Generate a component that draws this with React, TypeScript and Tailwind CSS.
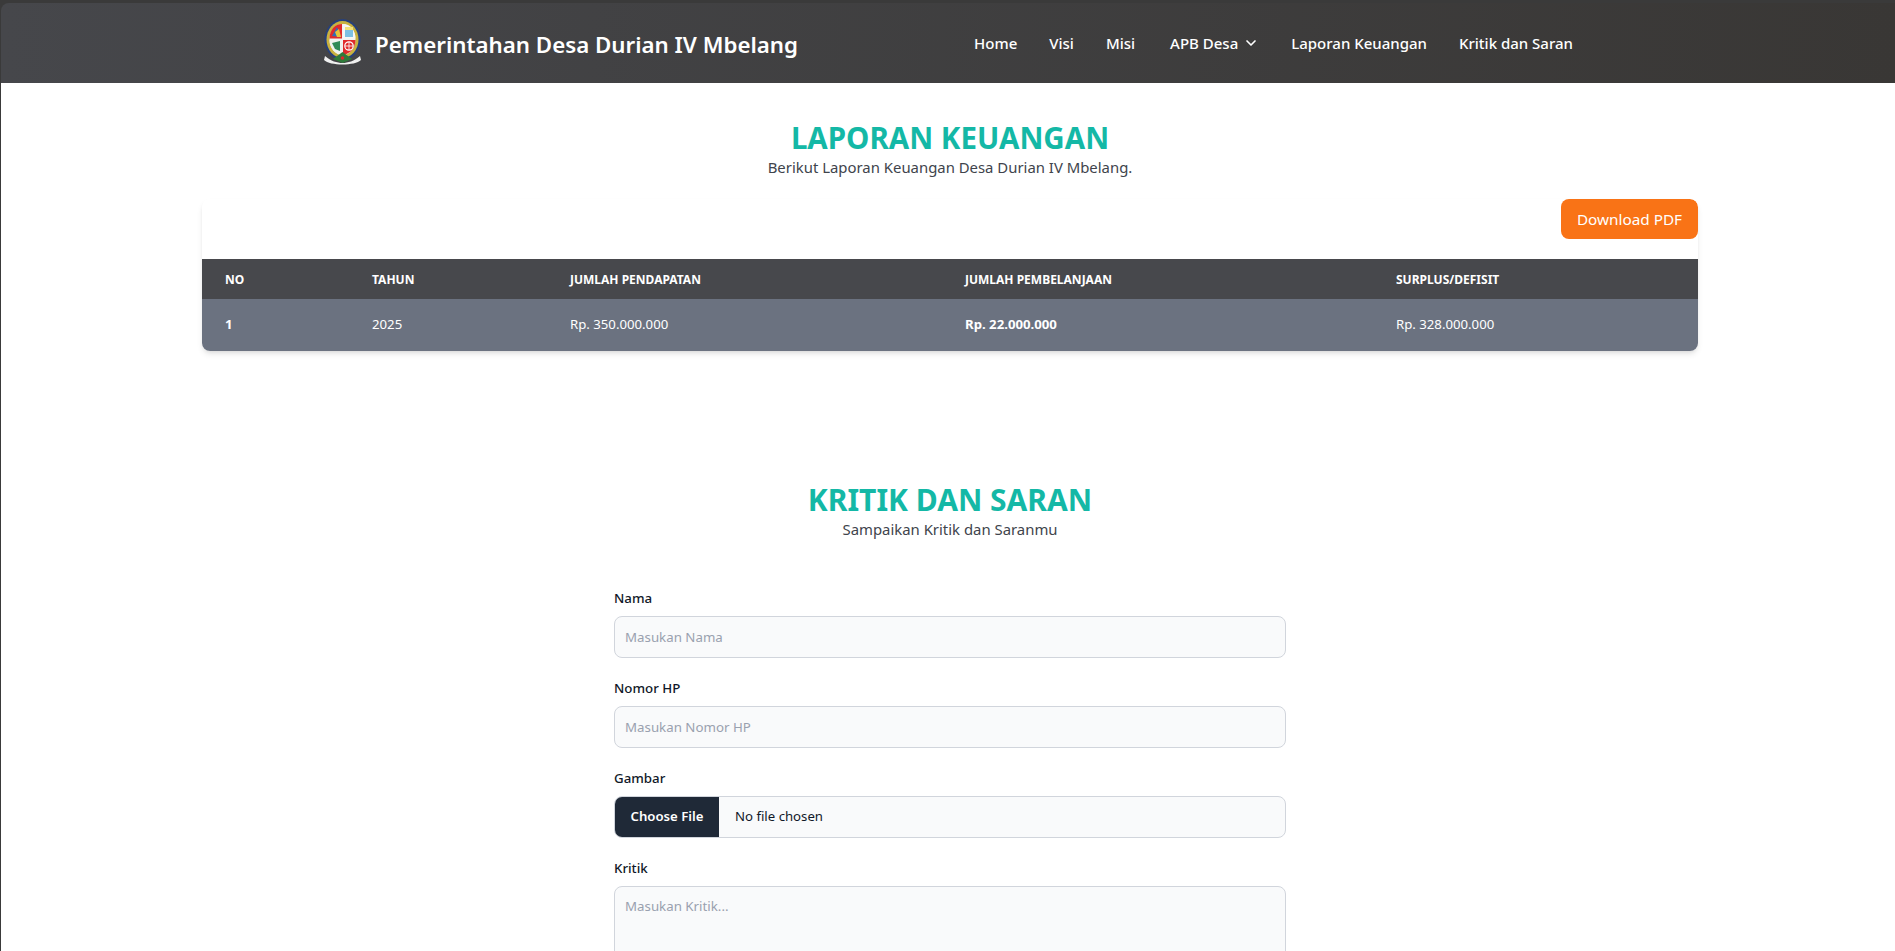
import { ChevronDown } from 'lucide-react';

const navLinks = ['Home', 'Visi', 'Misi'];

function Logo() {
  return (
    <svg width="37" height="48" viewBox="0 0 37 48" className="shrink-0">
      <ellipse cx="18.5" cy="20.5" rx="18" ry="20.5" fill="#27407a" />
      <ellipse cx="18.5" cy="20.5" rx="16" ry="18.5" fill="#c9b23f" />
      <ellipse cx="18.5" cy="20.5" rx="13" ry="15.5" fill="#f2f2f2" />
      <path d="M18 5 C11 5 5.5 11 5.5 19.5 L18 19.5 Z" fill="#e02b2b" />
      <path d="M19 5 C26 5 31.5 11 31.5 19.5 L19 19.5 Z" fill="#f6f6f6" />
      <path d="M5.5 21 L18 21 L18 36 C11 35 5.5 29 5.5 21 Z" fill="#eef3ee" />
      <path d="M31.5 21 L19 21 L19 36 C26 35 31.5 29 31.5 21 Z" fill="#e02b2b" />
      <path d="M8 17 L13 8 L17 18 Z" fill="#2f6fb5" />
      <path d="M11 13 L15 10 L17 18 L13 18 Z" fill="#e8c23a" />
      <path d="M21 9 H29 V18 H21 Z" fill="#7cc0e4" />
      <path d="M21 8 H29 V11 H21 Z" fill="#f3e27a" />
      <path d="M8 24 L16 22 L16 32 L11 30 Z" fill="#2e8b57" />
      <circle cx="25" cy="27" r="4.2" fill="none" stroke="#ffffff" strokeWidth="1.2" />
      <path d="M25 23 V31 M21 27 H29" stroke="#ffffff" strokeWidth="0.8" />
      <path d="M1 37 C7 42 13 44 18.5 44 C24 44 30 42 36 37 L37 41 C31 47 6 47 0 41 Z" fill="#f0f0f0" />
      <path d="M9 40 L18.5 33 L28 40 L18.5 44 Z" fill="#2f7a3a" />
      <circle cx="18.5" cy="39" r="1.8" fill="#d92b2b" />
    </svg>
  );
}

function Field({ label, placeholder }: { label: string; placeholder: string }) {
  return (
    <div>
      <label className="mb-2 block text-[13.3px] leading-5 font-medium text-gray-900">{label}</label>
      <input
        placeholder={placeholder}
        className="block h-[42px] w-full rounded-lg border border-gray-300 bg-gray-50 px-2.5 text-[13.3px] text-gray-900 placeholder:text-gray-400"
      />
    </div>
  );
}

export default function App() {
  return (
    <div className="h-[951px] overflow-hidden border-l border-[#3a3a3a] bg-white font-['Noto_Sans',sans-serif]">
      <div className="bg-[#3a3a3a] pt-[3px]">
        <nav className="h-[80px] rounded-tl-lg bg-gradient-to-r from-[#46474b] to-[#393735] text-white">
          <div className="ml-[323px] flex h-full w-[1249px] items-center justify-between">
            <a className="flex items-center gap-3.5">
              <Logo />
              <span className="pt-[3px] text-[22.3px] font-semibold whitespace-nowrap">Pemerintahan Desa Durian IV Mbelang</span>
            </a>
            <ul className="flex items-center gap-8 text-[15px] font-medium">
              {navLinks.map((link) => (
                <li key={link}>{link}</li>
              ))}
              <li className="ml-[3px] flex items-center gap-[5px]">
                APB Desa
                <ChevronDown size={16} strokeWidth={2.5} />
              </li>
              <li>Laporan Keuangan</li>
              <li>Kritik dan Saran</li>
            </ul>
          </div>
        </nav>
      </div>

      <main className="ml-[201px] w-[1496px]">
        <section className="pt-[37px] text-center">
          <h2 className="text-[29.5px] leading-9 font-bold text-[#14b8a6]">LAPORAN KEUANGAN</h2>
          <p className="text-[14.9px] leading-[22px] text-[#40444c]">Berikut Laporan Keuangan Desa Durian IV Mbelang.</p>
        </section>

        <div className="mt-[21px] overflow-hidden rounded-lg bg-white shadow-md">
          <div className="flex justify-end pb-5">
            <button className="h-10 rounded-lg bg-[#f97316] px-4 text-[15.3px] text-white">Download PDF</button>
          </div>
          <table className="w-full table-fixed text-left text-[13.2px] text-white">
            <thead className="bg-[#47484c] text-xs font-bold uppercase">
              <tr className="h-10">
                <th className="w-[147px] pt-0.5 pl-[23px] font-bold">No</th>
                <th className="w-[198px] pt-0.5 pl-[23px] font-bold">Tahun</th>
                <th className="w-[395px] pt-0.5 pl-[23px] font-bold">Jumlah Pendapatan</th>
                <th className="w-[431px] pt-0.5 pl-[23px] font-bold">Jumlah Pembelanjaan</th>
                <th className="pt-0.5 pl-[23px] font-bold">Surplus/Defisit</th>
              </tr>
            </thead>
            <tbody className="bg-[#6b7280]">
              <tr className="h-[52px]">
                <td className="pl-[23px] font-bold">1</td>
                <td className="pl-[23px]">2025</td>
                <td className="pl-[23px]">Rp. 350.000.000</td>
                <td className="pl-[23px] font-bold">Rp. 22.000.000</td>
                <td className="pl-[23px]">Rp. 328.000.000</td>
              </tr>
            </tbody>
          </table>
        </div>

        <section className="mt-[131px] text-center">
          <h2 className="text-[30px] leading-9 font-bold text-[#14b8a6]">KRITIK DAN SARAN</h2>
          <p className="text-[14.9px] leading-[22px] text-[#40444c]">Sampaikan Kritik dan Saranmu</p>
        </section>

        <form className="mx-auto mt-[48px] flex w-[672px] flex-col gap-5">
          <Field label="Nama" placeholder="Masukan Nama" />
          <Field label="Nomor HP" placeholder="Masukan Nomor HP" />
          <div>
            <label className="mb-2 block text-[13.3px] leading-5 font-medium text-gray-900">Gambar</label>
            <div className="flex h-[42px] w-full items-center overflow-hidden rounded-lg border border-gray-300 bg-gray-50 text-[13.2px] text-gray-900">
              <span className="flex h-full w-[104px] items-center justify-center bg-[#1f2937] font-semibold text-white">Choose File</span>
              <span className="ml-4">No file chosen</span>
            </div>
          </div>
          <div>
            <label className="mb-2 block text-[13.3px] leading-5 font-medium text-gray-900">Kritik</label>
            <textarea
              placeholder="Masukan Kritik..."
              rows={6}
              className="block w-full rounded-lg border border-gray-300 bg-gray-50 p-2.5 text-[13.3px] text-gray-900 placeholder:text-gray-400"
            />
          </div>
        </form>
      </main>
    </div>
  );
}
